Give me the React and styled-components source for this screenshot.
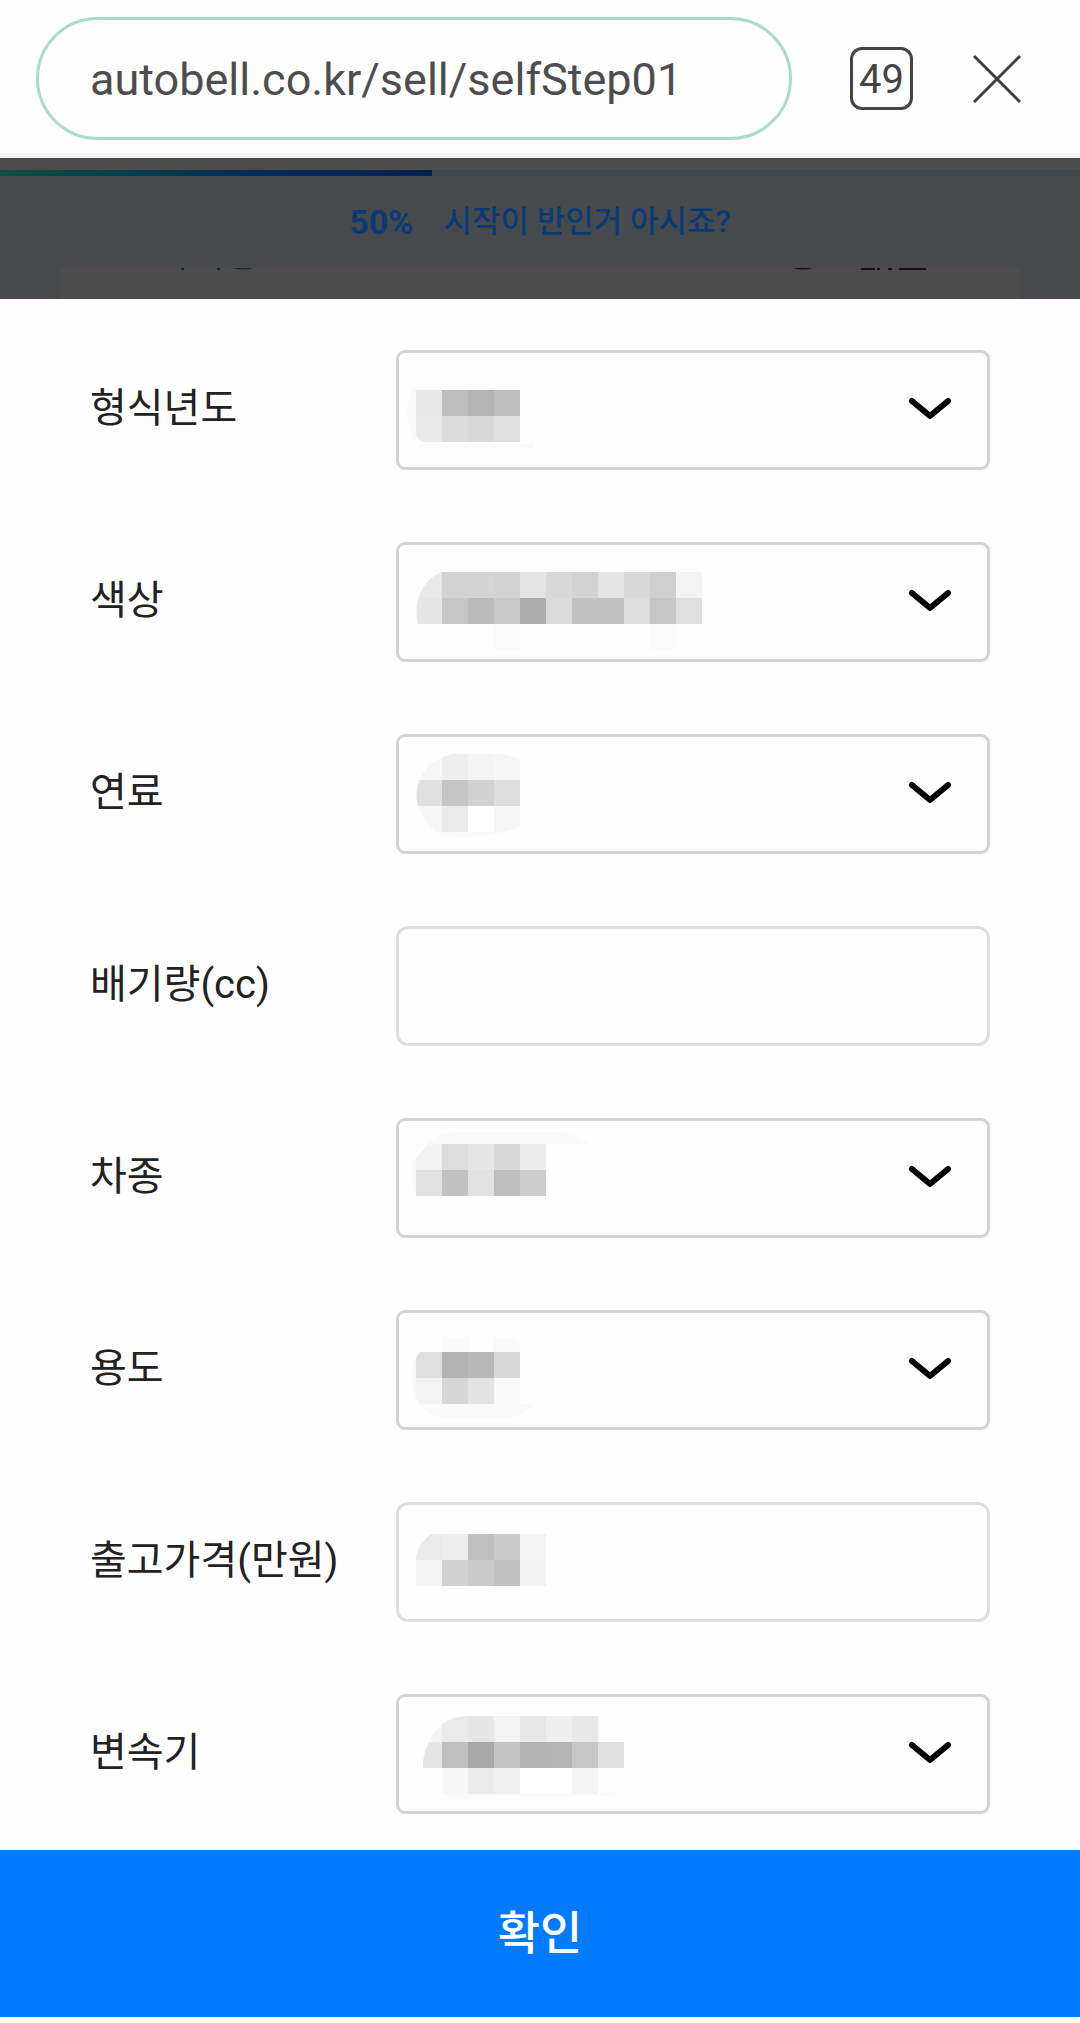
import React from 'react'
import styled, { createGlobalStyle } from 'styled-components'

const GlobalStyle = createGlobalStyle`
    * {
        box-sizing: border-box;
    }

    body {
        margin: 0;
        background-color: #fefefe;
        color: #222;
        font-family: Roboto, 'Noto Sans CJK KR', sans-serif;
    }
`

const AddressBar = styled.header`
    display: flex;
    align-items: center;
    padding: 17px 59px 13px 36px;
    border-bottom: 5px solid #f6f6f6;
    background-color: #fefefe;
`

const AddressInput = styled.input`
    flex: 1;
    min-width: 0;
    height: 123px;
    padding: 2px 51px 0;
    border: 3px solid #a9dcc9;
    border-radius: 62px;
    outline: none;
    background-color: #fefefe;
    color: #4d4d4d;
    font-family: Roboto, sans-serif;
    font-size: 45px;
`

const TabCount = styled.button`
    width: 63px;
    height: 63px;
    margin: 0 60px 0 58px;
    padding: 2px 0 0;
    border: 3px solid #444;
    border-radius: 12px;
    background: none;
    color: #444;
    font-family: Roboto, sans-serif;
    font-size: 40px;
`

const CloseButton = styled.button`
    display: flex;
    padding: 0;
    border: 0;
    background: none;
`

const Backdrop = styled.section`
    padding-top: 12px;
    background-color: #4c4c4c;
`

const ProgressTrack = styled.div`
    height: 6px;
    background-color: #3f474c;
`

const ProgressFill = styled.div`
    height: 6px;
    background-image: linear-gradient(to right, #0c4f40, #032a58 60%, #02204c);
`

const StepArea = styled.div`
    padding: 22px 60px 0;
    background-color: #464a4c;
`

const StepText = styled.p`
    display: flex;
    justify-content: center;
    gap: 30px;
    margin: 0;
    padding-bottom: 21px;
    color: #0a3a76;
    font-size: 31px;
    line-height: 48px;
    font-weight: 500;
`

const StepPercent = styled.strong`
    font-size: 34px;
`

const StepCard = styled.div`
    display: flex;
    justify-content: space-between;
    height: 32px;
    padding: 0 93px 0 120px;
    background-color: #4c4c4c;
`

const Form = styled.form`
    display: flex;
    flex-direction: column;
`

const Fields = styled.div`
    display: flex;
    flex-direction: column;
    gap: 72px;
    padding: 51px 90px 36px;
`

const Row = styled.div`
    display: grid;
    grid-template-columns: 306px 1fr;
    align-items: center;
`

const Label = styled.label`
    padding-bottom: 2px;
    font-size: 40px;
    line-height: 60px;
    white-space: nowrap;
`

const Control = styled.div`
    position: relative;
    height: 120px;
`

const Box = styled.input`
    width: 100%;
    height: 120px;
    padding: 0 36px;
    border: 3px solid ${({ as }) => (as === 'select' ? '#d3d4d4' : '#dedede')};
    border-radius: ${({ as }) => (as === 'select' ? '9px' : '12px')};
    outline: none;
    appearance: none;
    background-color: #fefefe;
    color: #222;
    font-family: inherit;
    font-size: 40px;
`

const MaskSvg = styled.svg`
    position: absolute;
    top: 0;
    left: 0;
    pointer-events: none;
`

const Chevron = styled.svg`
    position: absolute;
    top: 47px;
    right: 38px;
    pointer-events: none;
`

const SubmitButton = styled.button`
    height: 167px;
    margin-bottom: 6px;
    padding: 0 0 10px;
    border: 0;
    background-color: #007aff;
    color: #fff;
    font-family: 'Noto Sans CJK KR', sans-serif;
    font-size: 46px;
    font-weight: 500;
`

const CELL = 26

// top: y of the first row of cells, clip: outline of the masked area, halo: faint smear around it
const fields = [
    {
        id: 'year',
        label: '형식년도',
        select: true,
        top: 40,
        clip: 'M20 40H124V92H28Q20 90 20 84Z',
        halo: 'M20 35Q11 44 11 60Q11 86 24 98H138V94H20Z',
        cells: ['e8e8e8 bdbdbd b4b4b4 bebebe', 'e9e9e9 dcdcdc d8d8d8 dedede'],
    },
    {
        id: 'color',
        label: '색상',
        select: true,
        top: 30,
        clip: 'M46 30H306V110H46V82H22Q18 66 24 52Q30 36 46 30Z',
        cells: [
            'e9e9e9 d3d3d3 d4d4d4 d2d2d2 e4e4e4 d8d8d8 d3d3d3 e5e5e5 d9d9d9 cfcfcf f3f3f3',
            'e6e6e6 c6c6c6 bbbbbb c9c9c9 adadad dbdbdb c2c2c2 c2c2c2 dddddd c6c6c6 dedede',
            '- - - fbfbfb - - - - - fbfbfb -',
        ],
    },
    {
        id: 'fuel',
        label: '연료',
        select: true,
        top: 20,
        clip: 'M61 19H98Q114 20 124 27V93Q112 98 98 100L66 104Q50 103 40 98Q28 88 22 72Q18 58 24 44Q34 24 61 19Z',
        halo: 'M61 19H98Q114 20 124 27V93Q112 98 98 100L66 104Q50 103 40 98Q28 88 22 72Q18 58 24 44Q34 24 61 19Z',
        cells: [
            'f6f6f6 eeeeee f4f4f4 f6f6f6',
            'e0e0e0 c5c5c5 d1d1d1 dddddd',
            'f7f7f7 eaeaea ffffff f7f7f7',
        ],
    },
    { id: 'displacement', label: '배기량(cc)' },
    {
        id: 'model',
        label: '차종',
        select: true,
        top: 26,
        clip: 'M32 26H150V78H20V40Z',
        halo: 'M54 14H164Q180 16 193 26H20V78Q14 60 16 48Q22 22 54 14Z',
        cells: ['f2f2f2 dddddd e6e6e6 d8d8d8 eaeaea', 'e1e1e1 c1c1c1 e2e2e2 bebebe cccccc'],
    },
    {
        id: 'usage',
        label: '용도',
        select: true,
        top: 42,
        clip: 'M24 42H124V94H26Q20 92 20 86V48Z',
        halo: 'M46 27H74V42H97V27H118Q124 29 124 34V94H138Q130 104 112 108H46Q28 104 20 90Q14 70 17 52L24 42H46Z',
        cells: ['dedede b3b3b3 b9b9b9 d8d8d8', 'f3f3f3 d6d6d6 e3e3e3 f9f9f9'],
    },
    {
        id: 'price',
        label: '출고가격(만원)',
        top: 32,
        clip: 'M35 32H150V84H20V54Q24 40 35 32Z',
        cells: ['ebebeb efefef c0c0c0 cbcbcb f3f3f3', 'f4f4f4 d1d1d1 cacaca c2c2c2 f2f2f2'],
    },
    {
        id: 'transmission',
        label: '변속기',
        select: true,
        top: 22,
        clip: 'M72 22H228V100H46V74H27Q26 60 36 42Q48 22 72 22Z',
        halo: 'M46 74H228V98Q216 102 204 102H74L70 107Q54 107 46 98Z',
        cells: [
            'f4f4f4 eaeaea e6e6e6 f3f3f3 e8e8e8 efefef e8e8e8 -',
            'e6e6e6 bfbfbf a8a8a8 c4c4c4 b3b3b3 b4b4b4 c6c6c6 e0e0e0',
            '- f8f8f8 ebebeb f0f0f0 ffffff ffffff f4f4f4 fdfdfd',
        ],
    },
]

const Mask = ({ id, top, clip, halo, cells }) => (
    <MaskSvg width="340" height="120" viewBox="0 0 340 120" aria-hidden="true">
        <clipPath id={`mask-${id}`}>
            <path d={clip} />
        </clipPath>
        {halo && <path d={halo} fill="#fafafa" />}
        <g clipPath={`url(#mask-${id})`} shapeRendering="crispEdges">
            {cells.map((line, row) =>
                line.split(' ').map((color, col) => {
                    if (color === '-') return null
                    return (
                        <rect
                            key={`${row}-${col}`}
                            x={20 + col * CELL}
                            y={top + row * CELL}
                            width={CELL}
                            height={CELL}
                            fill={`#${color}`}
                        />
                    )
                }),
            )}
        </g>
    </MaskSvg>
)

const Field = ({ field }) => (
    <Row>
        <Label htmlFor={field.id}>{field.label}</Label>
        <Control>
            {field.select ? (
                <Box as="select" id={field.id} defaultValue="">
                    <option value="" aria-label={field.label} />
                </Box>
            ) : (
                <Box id={field.id} type="text" inputMode="numeric" />
            )}
            {field.cells && <Mask {...field} />}
            {field.select && (
                <Chevron width="44" height="26" viewBox="0 0 44 26" fill="none" aria-hidden="true">
                    <path
                        d="M4 4L22 19L40 4"
                        stroke="#000"
                        strokeWidth="6"
                        strokeLinecap="round"
                        strokeLinejoin="round"
                    />
                </Chevron>
            )}
        </Control>
    </Row>
)

const App = () => {
    return (
        <>
            <GlobalStyle />
            <AddressBar>
                <AddressInput
                    type="text"
                    aria-label="주소"
                    defaultValue="autobell.co.kr/sell/selfStep01"
                />
                <TabCount type="button">49</TabCount>
                <CloseButton type="button" aria-label="닫기">
                    <svg width="48" height="48" viewBox="0 0 48 48" fill="none">
                        <path d="M1 1L47 47M47 1L1 47" stroke="#3d3d3d" strokeWidth="3" />
                    </svg>
                </CloseButton>
            </AddressBar>

            <Backdrop>
                <ProgressTrack>
                    <ProgressFill style={{ width: '40%' }} />
                </ProgressTrack>
                <StepArea>
                    <StepText>
                        <StepPercent>50%</StepPercent>
                        <span>시작이 반인거 아시죠?</span>
                    </StepText>
                    {/* lower edge of the row that has scrolled under the step header */}
                    <StepCard>
                        <svg width="74" height="3" viewBox="0 0 74 3" aria-hidden="true">
                            <path d="M1 1h3v2h-3zM37 1h3v2h-3zM52 1h21q-10 3-21 0z" fill="#25282a" />
                        </svg>
                        <svg width="134" height="3" viewBox="0 0 134 3" aria-hidden="true">
                            <path
                                d="M0 1h19q-9 3-19 0zM68 1h14v2h-14zM84 1h3v2h-3zM95 1h4v2h-4zM106 1h27v2h-27z"
                                fill="#111"
                            />
                        </svg>
                    </StepCard>
                </StepArea>
            </Backdrop>

            <Form onSubmit={(e) => e.preventDefault()}>
                <Fields>
                    {fields.map((field) => (
                        <Field key={field.id} field={field} />
                    ))}
                </Fields>
                <SubmitButton type="submit">확인</SubmitButton>
            </Form>
        </>
    )
}

export default App
